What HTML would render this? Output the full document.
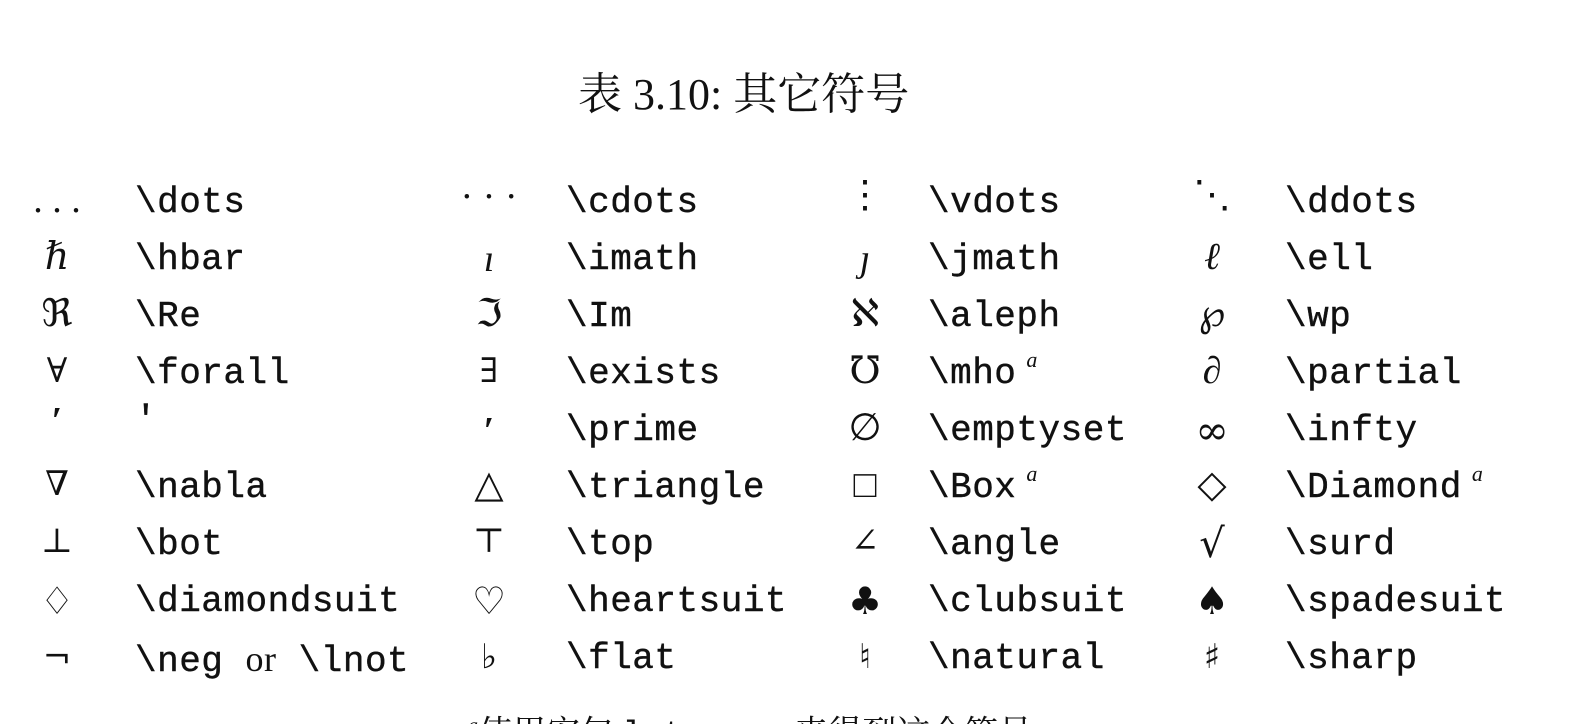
<!DOCTYPE html>
<html><head><meta charset="utf-8"><style>
html,body{margin:0;padding:0;background:#fff;width:1582px;height:724px;overflow:hidden;position:relative;color:#111}
.t{position:absolute;left:578px;top:69px;font:44px/1.2 "Liberation Serif","Noto Serif CJK SC",serif;white-space:pre}
.c{position:absolute;font:36px/1 "Liberation Mono",monospace;white-space:pre;-webkit-text-stroke:0.4px #111;letter-spacing:0.5px}
.s{position:absolute;width:80px;text-align:center;font:38px/1 "Liberation Serif","DejaVu Serif",serif}
.a{font:italic 22px "Liberation Serif",serif;position:relative;top:-16px;margin-left:10px;-webkit-text-stroke:0}
.r{font-family:"Liberation Serif",serif;-webkit-text-stroke:0}
.f{position:absolute;left:468px;top:716px;font:34px/1 "Liberation Serif","Noto Serif CJK SC",serif;white-space:pre}
.d{font-family:"DejaVu Serif",serif;font-size:34px}
</style></head><body>
<div class="t">表 3.10: 其它符号</div>
<div class="s" style="left:17px;top:181px">. . .</div><div class="c" style="left:135px;top:185px">\dots</div>
<div class="s" style="left:449px;top:178px">· · ·</div><div class="c" style="left:566px;top:185px">\cdots</div>
<div class="s" style="left:825px;top:176px">⋮</div><div class="c" style="left:928px;top:185px">\vdots</div>
<div class="s" style="left:1172px;top:176px">⋱</div><div class="c" style="left:1285px;top:185px">\ddots</div>

<div class="s" style="left:17px;top:238px"><i>ℏ</i></div><div class="c" style="left:135px;top:242px">\hbar</div>
<div class="s" style="left:449px;top:240px"><i>ı</i></div><div class="c" style="left:566px;top:242px">\imath</div>
<div class="s" style="left:825px;top:240px"><i>ȷ</i></div><div class="c" style="left:928px;top:242px">\jmath</div>
<div class="s" style="left:1172px;top:238px"><i>ℓ</i></div><div class="c" style="left:1285px;top:242px">\ell</div>

<div class="s" style="left:17px;top:295px">ℜ</div><div class="c" style="left:135px;top:299px">\Re</div>
<div class="s" style="left:449px;top:295px">ℑ</div><div class="c" style="left:566px;top:299px">\Im</div>
<div class="s" style="left:825px;top:295px">ℵ</div><div class="c" style="left:928px;top:299px">\aleph</div>
<div class="s" style="left:1172px;top:295px">℘</div><div class="c" style="left:1285px;top:299px">\wp</div>

<div class="s d" style="left:17px;top:354px">∀</div><div class="c" style="left:135px;top:356px">\forall</div>
<div class="s d" style="left:449px;top:354px">∃</div><div class="c" style="left:566px;top:356px">\exists</div>
<div class="s" style="left:825px;top:352px">℧</div><div class="c" style="left:928px;top:356px">\mho<span class="a">a</span></div>
<div class="s" style="left:1172px;top:352px"><i>∂</i></div><div class="c" style="left:1285px;top:356px">\partial</div>

<div class="s" style="left:17px;top:402px"><b>′</b></div><div class="c" style="left:135px;top:403px">'</div>
<div class="s" style="left:449px;top:412px"><b>′</b></div><div class="c" style="left:566px;top:413px">\prime</div>
<div class="s" style="left:825px;top:409px">∅</div><div class="c" style="left:928px;top:413px">\emptyset</div>
<div class="s d" style="left:1172px;top:411px;font-size:40px">∞</div><div class="c" style="left:1285px;top:413px">\infty</div>

<div class="s d" style="left:17px;top:467px">∇</div><div class="c" style="left:135px;top:470px">\nabla</div>
<div class="s" style="left:449px;top:466px">△</div><div class="c" style="left:566px;top:470px">\triangle</div>
<div class="s" style="left:825px;top:466px">□</div><div class="c" style="left:928px;top:470px">\Box<span class="a">a</span></div>
<div class="s" style="left:1172px;top:466px">◇</div><div class="c" style="left:1285px;top:470px">\Diamond<span class="a">a</span></div>

<div class="s d" style="left:17px;top:524px">⊥</div><div class="c" style="left:135px;top:527px">\bot</div>
<div class="s d" style="left:449px;top:524px">⊤</div><div class="c" style="left:566px;top:527px">\top</div>
<div class="s d" style="left:825px;top:524px">∠</div><div class="c" style="left:928px;top:527px">\angle</div>
<div class="s d" style="left:1172px;top:524px;font-size:40px">√</div><div class="c" style="left:1285px;top:527px">\surd</div>

<div class="s d" style="left:17px;top:582px;font-size:38px">♢</div><div class="c" style="left:135px;top:584px">\diamondsuit</div>
<div class="s d" style="left:449px;top:582px;font-size:38px">♡</div><div class="c" style="left:566px;top:584px">\heartsuit</div>
<div class="s d" style="left:825px;top:582px;font-size:38px">♣</div><div class="c" style="left:928px;top:584px">\clubsuit</div>
<div class="s d" style="left:1172px;top:582px;font-size:38px">♠</div><div class="c" style="left:1285px;top:584px">\spadesuit</div>

<div class="s d" style="left:17px;top:640px">¬</div><div class="c" style="left:135px;top:641px">\neg <span class="r">or</span> \lnot</div>
<div class="s d" style="left:449px;top:640px">♭</div><div class="c" style="left:566px;top:641px">\flat</div>
<div class="s d" style="left:825px;top:640px">♮</div><div class="c" style="left:928px;top:641px">\natural</div>
<div class="s d" style="left:1172px;top:640px">♯</div><div class="c" style="left:1285px;top:641px">\sharp</div>

<div class="f"><sup style="font-size:20px;font-style:italic">a</sup>使用宏包 <span style="font-family:'Liberation Mono',monospace">latexsym</span> 来得到这个符号</div>
</body></html>
